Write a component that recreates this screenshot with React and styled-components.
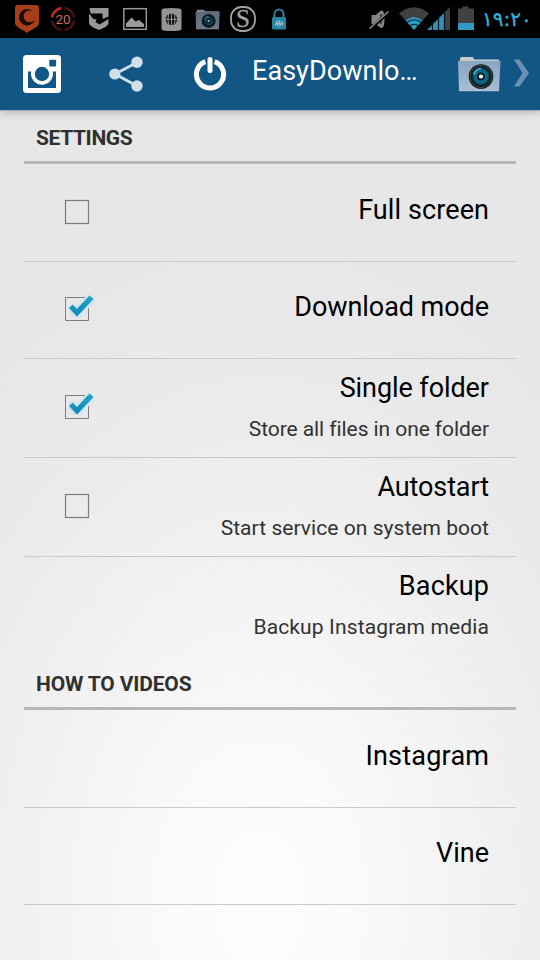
import React from "react";
import styled, { createGlobalStyle } from "styled-components";

const GlobalStyle = createGlobalStyle`
  * {
    box-sizing: border-box;
  }

  body {
    margin: 0;
    background: #e7e7e7;
    font-family: Roboto, "Noto Sans", sans-serif;
  }

  svg {
    display: block;
    flex: none;
  }
`;

const Screen = styled.div`
  display: flex;
  flex-direction: column;
  width: 540px;
  height: 960px;
  overflow: hidden;
  background: radial-gradient(
    ellipse 440px 660px at 260px 900px,
    #fdfdfd 0%,
    #fafafa 22%,
    #f2f2f2 50%,
    #ebebeb 75%,
    #e7e7e7 100%
  );
`;

const StatusBar = styled.header`
  display: flex;
  flex: none;
  align-items: center;
  justify-content: space-between;
  height: 38px;
  padding: 0 9px;
  background: #000;
`;

const StatusGroup = styled.div`
  display: flex;
  align-items: center;
`;

const Spacer = styled.div`
  width: ${(props) => props.$width}px;
`;

const Clock = styled.span`
  width: 49px;
  margin-left: 8px;
  color: #35b0dd;
  font-family: "DejaVu Sans", sans-serif;
  font-size: 20px;
  line-height: 38px;
  letter-spacing: 0.4px;
  white-space: nowrap;
  -webkit-text-stroke: 0.3px #35b0dd;
`;

const ActionBar = styled.nav`
  display: flex;
  flex: none;
  align-items: center;
  height: 72px;
  background: #115685;
  box-shadow: 0 1px 0 #a3b1bc, 0 2px 8px rgba(0, 0, 0, 0.25);
`;

const ActionButton = styled.button`
  display: flex;
  flex: none;
  align-items: center;
  justify-content: center;
  width: 84px;
  height: 72px;
  padding: 0;
  border: 0;
  background: none;
`;

const FolderButton = styled(ActionButton)`
  width: 48px;
`;

const NextButton = styled(ActionButton)`
  width: 24px;
  margin: 0 0 3px 7px;
`;

const BarTitle = styled.h1`
  width: 203px;
  margin: 0 0 7px;
  color: #fff;
  font-size: 27px;
  font-weight: 400;
  line-height: 32px;
  letter-spacing: 0.05px;
  white-space: nowrap;
`;

const Settings = styled.main`
  margin: 0 24px;
`;

const SectionTitle = styled.h2`
  height: 54px;
  margin: 0;
  padding: 3px 12px 0;
  border-bottom: 3px solid #b7b7b7;
  color: #303030;
  font-size: 21px;
  font-weight: 700;
  line-height: 50px;
  letter-spacing: ${(props) => props.$spacing}px;
`;

const Row = styled.div`
  display: flex;
  align-items: center;
  justify-content: space-between;
  height: ${(props) => props.$height}px;
  padding: 0 27px 0 33px;
  border-bottom: 1px solid ${(props) => (props.$last ? "transparent" : "#cacaca")};
`;

const RowText = styled.div`
  margin-left: auto;
  padding-bottom: ${(props) => (props.$double ? 2 : 6)}px;
  text-align: right;
`;

const RowTitle = styled.div`
  color: #000;
  font-size: 27px;
  line-height: 32px;
  letter-spacing: ${(props) => props.$spacing}px;
  margin-right: ${(props) => -props.$spacing}px;
`;

const RowSummary = styled.div`
  margin-top: 13px;
  margin-right: ${(props) => -props.$spacing}px;
  color: #323232;
  font-size: 21px;
  line-height: 25px;
  letter-spacing: ${(props) => props.$spacing}px;
`;

const FolderSlot = styled.div`
  display: flex;
  justify-content: center;
  width: 36px;
`;

const CheckboxIcon = styled.svg`
  margin-bottom: 2px;
`;

function ShieldIcon() {
  return (
    <svg width="36" height="38" viewBox="0 0 36 38">
      <path d="M9 5h18q3 0 3 3v15c0 4-7 6-12 10C13 29 6 27 6 23V8q0-3 3-3z" fill="#a63f17" />
      <path d="M24.500 12a8.200 8.200 0 1 0 1.500 7.500c-2 3-6 3.500-9 1.500-3-2.500-3-7 0-9.500 2.500-1.500 5.500-1.500 7.500.5z" fill="#1c0b06" />
    </svg>
  );
}

function TwentyIcon() {
  return (
    <svg width="36" height="38" viewBox="0 0 36 38">
      <g fill="none" strokeWidth="2.600">
        <path d="M7 17.500A11 11 0 0 1 16.500 8" stroke="#c02a20" />
        <path d="M19.500 8A11 11 0 0 1 29 17.500M29 20.500A11 11 0 0 1 19.500 30M16.500 30A11 11 0 0 1 7 20.500" stroke="#48130f" />
      </g>
      <text x="18" y="24" textAnchor="middle" fontFamily="Roboto, sans-serif" fontSize="13.500" fill="#d0685c">
        20
      </text>
    </svg>
  );
}

function GuardIcon() {
  return (
    <svg width="36" height="38" viewBox="0 0 36 38">
      <path
        d="M8.500 8h19v8.500l-6 2.500v-5.500H9.500z M8 14l2 1.500q1 4 5.500 4l-1 2.500 4 2.500 9-5.500v4c0 3-5 5-9.500 7-4.500-2-10-4-10-7.500z"
        fill="#979797"
      />
    </svg>
  );
}

function GalleryIcon() {
  return (
    <svg width="36" height="38" viewBox="0 0 36 38">
      <rect x="6.800" y="8.700" width="22.500" height="20.600" fill="none" stroke="#989898" strokeWidth="1.500" />
      <path d="M9 27v-3.500l5.500-6 4 4 3.500-1.500 5 4V27z" fill="#9a9a9a" />
    </svg>
  );
}

function GlobeIcon() {
  return (
    <svg width="36" height="38" viewBox="0 0 36 38">
      <path d="M10.500 8.500q8-1 16 0 2 .3 2 2v18q0 1.700-2 2-8 1-16 0-2-.3-2-2v-18q0-1.700 2-2z" fill="#929594" />
      <circle cx="18.500" cy="19.300" r="5.800" fill="#111" />
      <path d="M12.500 19.300h12M18.500 13.300v12M15.800 13.800q-2 5.500 0 11M21.200 13.800q2 5.500 0 11" fill="none" stroke="#929594" />
    </svg>
  );
}

function FolderCamera({ width, height, dim }) {
  return (
    <svg width={width} height={height} viewBox="0 0 44 36" opacity={dim ? 0.65 : 1}>
      <defs>
        <linearGradient id="folderFace" x1="0" y1="0" x2="0" y2="1">
          <stop offset="0" stopColor="#89a5c1" />
          <stop offset="1" stopColor="#a6bdd5" />
        </linearGradient>
        <radialGradient id="lens">
          <stop offset="0" stopColor="#0b6f94" />
          <stop offset="0.550" stopColor="#0d6583" />
          <stop offset="0.720" stopColor="#10242d" />
          <stop offset="1" stopColor="#111" />
        </radialGradient>
      </defs>
      <path d="M3 2.500q0-1.500 1.500-1.500h11l2 2.500H42V8H3z" fill="#c7cbcc" />
      <path d="M1 5h42.500L42 34.500H2z" fill="url(#folderFace)" />
      <path d="M2 34.700h40" stroke="#cbd1d5" strokeWidth="1" />
      <circle cx="24" cy="20.500" r="12.300" fill="url(#lens)" />
      <circle cx="24" cy="20.500" r="11" fill="none" stroke="#4d565c" strokeWidth="0.800" />
      <path d="M17 18.500a8 8 0 0 1 7-6" stroke="#3fa3bd" strokeWidth="2" fill="none" />
      <circle cx="23.800" cy="20.500" r="4" fill="#041c27" />
      <circle cx="24" cy="20.500" r="2.100" fill="#fff" />
    </svg>
  );
}

function LetterIcon() {
  return (
    <svg width="36" height="38" viewBox="0 0 36 38">
      <rect x="6" y="7" width="24" height="24" rx="10.500" fill="none" stroke="#a3a3a3" strokeWidth="1.800" />
      <text x="18" y="27.300" textAnchor="middle" fontFamily="Liberation Serif, serif" fontSize="25" fill="#a3a3a3" stroke="#a3a3a3" strokeWidth="0.300">
        S
      </text>
    </svg>
  );
}

function LockIcon() {
  return (
    <svg width="36" height="38" viewBox="0 0 36 38">
      <path d="M13.500 18v-4a4.500 4.500 0 0 1 9 0v4" fill="none" stroke="#2c809d" strokeWidth="2" />
      <rect x="11" y="17" width="14" height="12.500" rx="1.500" fill="#2585a5" />
      <path d="M14 25.500l2-4 .5 4 2-4 .5 4 2-4M21 25.500l1-3" fill="none" stroke="#9bb8bf" strokeWidth="1.200" />
    </svg>
  );
}

function MuteIcon() {
  return (
    <svg width="24" height="38" viewBox="0 0 24 38">
      <path d="M4.500 15h4l5.500-4.500q3.500-1 3.500 8.500t-3.500 9l-5.500-4h-4z" fill="#858585" />
      <path d="M13.500 14q2 5 0 10" stroke="#333" strokeWidth="1.500" fill="none" />
      <path d="M3 29L22 12" stroke="#000" strokeWidth="3.200" />
      <path d="M2.500 28.500L21.500 11.500" stroke="#8b8b8b" strokeWidth="1.600" />
    </svg>
  );
}

function SignalIcons() {
  return (
    <svg width="52" height="38" viewBox="398 0 52 38">
      <path d="M398 13.500q15-12.500 30 0l-15 16z" fill="#404040" />
      <path d="M404.500 20.500q8.500-7 17 0l-8.500 9.500z" fill="#2d9cc5" />
      <path d="M405.500 22.500q7.500-5.500 15 0M408.500 26q4.500-3.500 9 0" fill="none" stroke="#08202b" strokeWidth="1.100" />
      <path d="M426 30l17.500-17.500V30z" fill="#2f93b8" />
      <path d="M444 12l5-5v23h-5z" fill="#414141" />
      <path d="M431.500 22v8M437.500 16v14M443.500 10v20" stroke="#07161d" strokeWidth="1.300" />
    </svg>
  );
}

function BatteryIcon() {
  return (
    <svg width="16" height="38" viewBox="0 0 16 38">
      <path d="M0 8.500h4.500v-2h6v2H16V30H0z" fill="#424242" />
      <path d="M0 23h16v7H0z" fill="#2c9cc5" />
    </svg>
  );
}

function InstaIcon() {
  return (
    <svg width="38" height="38" viewBox="0 0 38 38">
      <rect width="38" height="38" rx="3.500" fill="#fff" />
      <rect x="26.300" y="4.800" width="6.800" height="6.800" rx="0.800" fill="#115685" />
      <path d="M5 16.500h3.200a11 11 0 1 0 21.600 0H33V33H5z" fill="#115685" />
      <circle cx="19" cy="19" r="10.600" fill="#fff" />
      <circle cx="19" cy="19" r="7.200" fill="#115685" />
    </svg>
  );
}

function ShareIcon() {
  return (
    <svg width="34" height="36" viewBox="0 0 34 36">
      <path d="M28 6.500L6 18l22 12" fill="none" stroke="#cfe0e8" strokeWidth="2.800" />
      <g fill="#cfe0e8">
        <circle cx="5.800" cy="18" r="5.600" />
        <circle cx="28" cy="6.200" r="5.700" />
        <circle cx="28" cy="30" r="5.700" />
      </g>
    </svg>
  );
}

function PowerIcon() {
  return (
    <svg width="34" height="36" viewBox="0 0 34 36">
      <path d="M12.300 5.600a13.600 13.600 0 1 0 9.400 0" fill="none" stroke="#fff" strokeWidth="5" />
      <path d="M17 3.500v11" stroke="#fff" strokeWidth="5" strokeLinecap="round" />
    </svg>
  );
}

function ChevronIcon() {
  return (
    <svg width="18" height="30" viewBox="0 0 18 30">
      <path d="M1 1.500h5.500L16 15 6.500 28.500H1L9.500 15z" fill="#6892af" />
    </svg>
  );
}

function Checkbox({ checked }) {
  return (
    <CheckboxIcon width="40" height="40" viewBox="0 0 40 40" role="checkbox" aria-checked={checked}>
      <defs>
        <filter id="glow" x="-40%" y="-40%" width="180%" height="180%">
          <feGaussianBlur stdDeviation="2.200" />
        </filter>
        <linearGradient id="tick" x1="0" y1="0" x2="0" y2="1">
          <stop offset="0" stopColor="#29a2cc" />
          <stop offset="1" stopColor="#0d87b5" />
        </linearGradient>
      </defs>
      {checked ? (
        <>
          <path d="M28 8.500H8.500v23h23V19" fill="none" stroke="#7d7d7d" />
          <path d="M14 18l6 6L34 9" fill="none" stroke="#7fdcf5" strokeWidth="6" opacity="0.600" filter="url(#glow)" />
          <path d="M12 19l3.500-3.500 4.500 4.500L32.500 6.500l4 3.500L20 27.500z" fill="url(#tick)" />
        </>
      ) : (
        <rect x="8.500" y="8.500" width="23" height="23" fill="none" stroke="#7d7d7d" strokeWidth="1.200" />
      )}
    </CheckboxIcon>
  );
}

function SettingRow({ title, spacing = 0, summary, summarySpacing = 0, checked, height, last }) {
  return (
    <Row $height={height} $last={last}>
      {checked !== undefined && <Checkbox checked={checked} />}
      <RowText $double={!!summary}>
        <RowTitle $spacing={spacing}>{title}</RowTitle>
        {summary && <RowSummary $spacing={summarySpacing}>{summary}</RowSummary>}
      </RowText>
    </Row>
  );
}

export default function App() {
  return (
    <>
      <GlobalStyle />
      <Screen>
        <StatusBar>
          <StatusGroup>
            <ShieldIcon />
            <TwentyIcon />
            <GuardIcon />
            <GalleryIcon />
            <GlobeIcon />
            <FolderSlot>
              <FolderCamera width={25} height={21} dim />
            </FolderSlot>
            <LetterIcon />
            <LockIcon />
          </StatusGroup>
          <StatusGroup>
            <MuteIcon />
            <Spacer $width={8} />
            <SignalIcons />
            <Spacer $width={7} />
            <BatteryIcon />
            <Clock dir="ltr">١٩:٢٠</Clock>
          </StatusGroup>
        </StatusBar>
        <ActionBar>
          <ActionButton aria-label="Instagram">
            <InstaIcon />
          </ActionButton>
          <ActionButton aria-label="Share">
            <ShareIcon />
          </ActionButton>
          <ActionButton aria-label="Power">
            <PowerIcon />
          </ActionButton>
          <BarTitle>EasyDownlo…</BarTitle>
          <FolderButton aria-label="Folder">
            <FolderCamera width={44} height={36} />
          </FolderButton>
          <NextButton aria-label="Next">
            <ChevronIcon />
          </NextButton>
        </ActionBar>
        <Settings>
          <SectionTitle $spacing={-0.38}>SETTINGS</SectionTitle>
          <SettingRow title="Full screen" spacing={0.1} checked={false} height={98} />
          <SettingRow title="Download mode" spacing={-0.06} checked height={97} />
          <SettingRow
            title="Single folder"
            spacing={-0.08}
            summary="Store all files in one folder"
            summarySpacing={-0.07}
            checked
            height={99}
          />
          <SettingRow
            title="Autostart"
            spacing={-0.1}
            summary="Start service on system boot"
            summarySpacing={0.05}
            checked={false}
            height={99}
          />
          <SettingRow
            title="Backup"
            spacing={0.15}
            summary="Backup Instagram media"
            summarySpacing={0.14}
            height={99}
            last
          />
          <SectionTitle $spacing={-0.16}>HOW TO VIDEOS</SectionTitle>
          <SettingRow title="Instagram" spacing={0.22} height={98} />
          <SettingRow title="Vine" height={97} />
        </Settings>
      </Screen>
    </>
  );
}
